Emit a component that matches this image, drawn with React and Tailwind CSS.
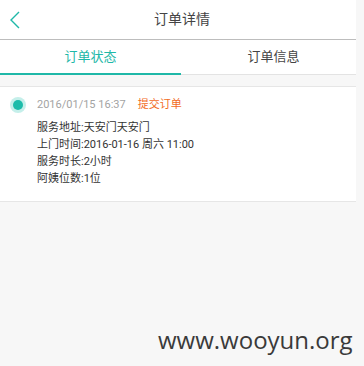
import React from "react";

const lines = ["服务地址:天安门天安门", "上门时间:2016-01-16 周六 11:00", "服务时长:2小时", "阿姨位数:1位"];

export default function App() {
  return (
    <div
      className="relative h-[366px] w-[364px] overflow-hidden bg-[#f7f7f7]"
      style={{ fontFamily: '"Roboto", "Noto Sans CJK SC", sans-serif' }}
    >
      <div className="relative flex h-[40px] w-[356px] items-center justify-center border-b border-[#bdbdbd] bg-white">
        <svg className="absolute left-[9px] top-[11px]" width="12" height="18" viewBox="0 0 12 18">
          <path d="M10 1 L2 9 L10 17" fill="none" stroke="#1fb8a8" strokeWidth="1.4" />
        </svg>
        <span className="ml-[8px] text-[14px] text-[#444]">订单详情</span>
      </div>
      <div className="flex h-[35px] w-[356px] bg-white">
        <div className="flex w-[181px] items-center justify-center border-b-2 border-[#1fb8a8] text-[13px] text-[#1fb8a8]">
          订单状态
        </div>
        <div className="flex flex-1 items-center justify-center border-b border-[#e3e3e3] pl-[10px] text-[13px] text-[#444]">
          订单信息
        </div>
      </div>
      <div className="mt-[11px] flex w-[356px] border-y border-[#e6e6e6] bg-white pb-[14px] pl-[10px] pt-[9px]">
        <div className="mt-[1px] flex h-[16px] w-[16px] items-center justify-center rounded-full bg-[#c5efea]">
          <div className="h-[10px] w-[10px] rounded-full bg-[#1cbcaa]" />
        </div>
        <div className="ml-[11px]">
          <div className="flex h-[18px] items-center text-[11px]">
            <span className="text-[#a3a3a3]">2016/01/15 16:37</span>
            <span className="ml-[12px] text-[#f26b1d]">提交订单</span>
          </div>
          <div className="mt-[5px] text-[11px] leading-[17px] text-[#333]">
            {lines.map((l) => (
              <div key={l}>{l}</div>
            ))}
          </div>
        </div>
      </div>
      <div
        className="absolute left-[158px] top-[322px] text-[24px] text-[#3a3a3a]"
        style={{ fontFamily: '"Open Sans", sans-serif' }}
      >
        www.wooyun.org
      </div>
    </div>
  );
}
